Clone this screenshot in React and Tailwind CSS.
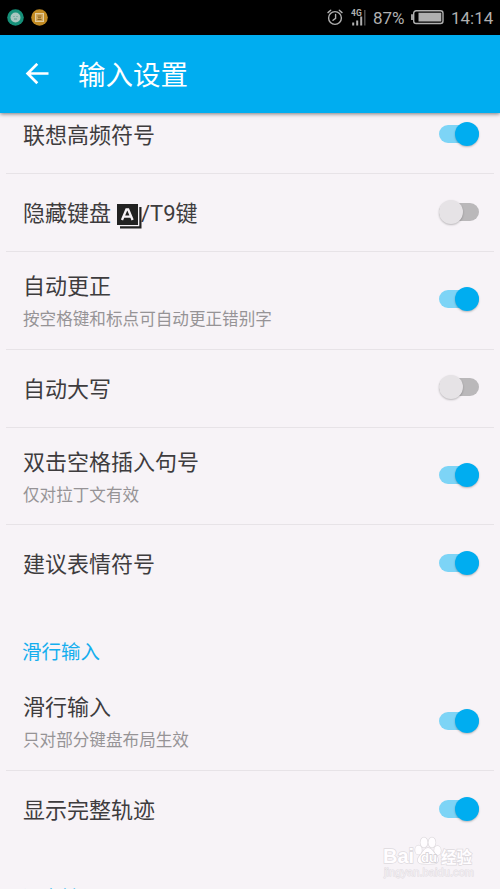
const rows = [
  { title: "联想高频符号", on: true },
  { title: "隐藏键盘", key: true, on: false },
  { title: "自动更正", hint: "按空格键和标点可自动更正错别字", on: true },
  { title: "自动大写", on: false },
  { title: "双击空格插入句号", hint: "仅对拉丁文有效", on: true },
  { title: "建议表情符号", on: true, last: true },
];

const slideRows = [
  { title: "滑行输入", hint: "只对部分键盘布局生效", on: true },
  { title: "显示完整轨迹", on: true, last: true },
];

function StatusBar() {
  return (
    <div className="h-[35px] shrink-0 bg-black flex items-center justify-between pl-[7px] pr-[7px] text-[#b0b0b0]">
      <div className="flex items-center gap-[7px]">
        <svg width="17" height="17" viewBox="0 0 17 17">
          <circle cx="8.5" cy="8.5" r="8.3" fill="#169079" />
          <circle cx="8.5" cy="8.5" r="5" fill="#a9c6c0" />
          <path d="M6.5 7.5h1M9.5 7.5h1M7 10h3" stroke="#5b9c90" strokeWidth="1" />
        </svg>
        <svg width="17" height="17" viewBox="0 0 17 17">
          <circle cx="8.5" cy="8.5" r="8.3" fill="#c18a22" />
          <rect x="4.5" y="4.5" width="8" height="8" fill="#d3a85b" stroke="#e2cda0" />
          <path d="M6.5 7h4M7 8.7h3M6.5 10.5h4" stroke="#8a6420" />
        </svg>
      </div>
      <div className="flex items-center">
        <svg width="16" height="17" viewBox="0 0 16 17" fill="none" stroke="currentColor" strokeWidth="1.4" strokeLinecap="round">
          <circle cx="8" cy="9" r="6.4" />
          <path d="M8.6 5.5V9.3L6 11.3M1 3.6L3.7 1.3M15 3.6L12.3 1.3" />
        </svg>
        <svg className="ml-[8px]" width="16" height="18" viewBox="0 0 16 18">
          <text x="0" y="7.2" fontSize="8.5" fontWeight="700" fontFamily="Roboto, sans-serif" fill="currentColor">4G</text>
          <path d="M2.2 13.5v3M6.2 11.5v5M10.2 7.5v9" stroke="currentColor" strokeWidth="2" />
          <path d="M13.8 1v15.5" stroke="#555" strokeWidth="1.4" />
        </svg>
        <span className="ml-[6px] pt-[2px] w-[33px] text-[17px] leading-none whitespace-nowrap">87%</span>
        <svg className="ml-[5px] -mt-[2px]" width="33" height="16" viewBox="0 0 33 16">
          <rect x="2.7" y="1.7" width="29.3" height="12.8" rx="2.5" fill="none" stroke="currentColor" strokeWidth="1.4" />
          <rect x="7.5" y="3.7" width="22.8" height="8.8" fill="currentColor" />
          <path d="M1 5.3v5.6" stroke="currentColor" strokeWidth="1.8" />
        </svg>
        <span className="ml-[7px] pt-[2px] w-[42px] text-[17px] leading-none whitespace-nowrap">14:14</span>
      </div>
    </div>
  );
}

function Header() {
  return (
    <div className="relative z-10 h-[78px] shrink-0 bg-[#00adf0] flex items-center pl-[25px] text-white shadow-[0_1px_4px_rgba(0,0,0,0.5)]">
      <svg width="24" height="22" viewBox="0 0 24 22" fill="none" stroke="currentColor" strokeWidth="2.7">
        <path d="M23.5 10.5H3M12.3 0.8L2.6 10.5L12.3 20.2" />
      </svg>
      <h1 className="ml-[29px] pt-[3px] text-[27.5px] leading-none">输入设置</h1>
    </div>
  );
}

function Switch({ on }) {
  return (
    <div className="relative mb-[2px] w-10 h-6 flex items-center">
      <div className={`w-10 h-[18px] rounded-full ${on ? "bg-[#7dd4f6]" : "bg-[#bab8ba]"}`}></div>
      <div className={`absolute top-0 size-6 rounded-full shadow-[0_1px_2px_rgba(0,0,0,0.25)] ${on ? "right-0 bg-[#00adf0]" : "left-0 bg-[#e6e3e6]"}`}></div>
    </div>
  );
}

// the "A" key with a second key behind it
function KeyIcon() {
  return (
    <svg className="ml-[6px] mt-[4px]" width="25" height="25" viewBox="0 0 25 25">
      <path d="M3 23.4H23.4V3" fill="none" stroke="#222" strokeWidth="2.2" />
      <rect width="21" height="21" fill="#222" />
      <path d="M5 16L9.4 5.5h1.8L15.6 16M7 12.6h6.8" fill="none" stroke="#f7f3f7" strokeWidth="2.3" />
    </svg>
  );
}

function Row({ title, hint, on, last, key9 }) {
  return (
    <div className={`mx-[6px] pl-[17px] pr-[15px] flex items-center justify-between border-b ${last ? "border-transparent" : "border-[#e7e3e7]"} ${hint ? "h-[97.7px]" : "h-[78px]"}`}>
      <div className="pt-[3px]">
        <div className="flex items-center text-[22px] leading-[30px] text-[#3e3c3e]">
          {title}
          {key9 && <KeyIcon />}
          {key9 && <span className="-ml-px">/T9键</span>}
        </div>
        {hint && <div className="mt-[6px] text-[16.6px] leading-6 text-[#969396]">{hint}</div>}
      </div>
      <Switch on={on} />
    </div>
  );
}

function SectionTitle({ children }) {
  return <h2 className="h-[70px] pl-[22px] pt-[35px] text-[19.5px] leading-[30px] text-[#14aeee]">{children}</h2>;
}

function Watermark() {
  return (
    <div className="absolute left-[382px] top-[834px] w-[94px]">
      <svg width="94" height="48" viewBox="0 0 94 48" fill="#fffdff" stroke="#dedade" strokeWidth="1.4" paintOrder="stroke" fontFamily="'Liberation Sans', 'Noto Sans CJK SC', sans-serif">
        <text x="1" y="29" fontSize="20" fontWeight="700" textLength="31" lengthAdjust="spacingAndGlyphs">Bai</text>
        <ellipse cx="36.5" cy="16" rx="3.3" ry="4.5" />
        <ellipse cx="42" cy="8.5" rx="3.5" ry="5" />
        <ellipse cx="50" cy="8.5" rx="3.5" ry="5" />
        <ellipse cx="55.5" cy="16.5" rx="3.3" ry="4.5" />
        <path d="M46 14c4 0 5 4 8 7s3 8-1 8.5c-5 .5-9 .5-14 0c-4-.5-4-5-1-8s4-7.5 8-7.5z" />
        <text x="39" y="28" fontSize="13" fontWeight="700" stroke="#d0ccd0">du</text>
        <text x="59" y="29" fontSize="15.5" fontWeight="700">经验</text>
        <text x="2" y="42" fontSize="11" strokeWidth="0.8" fill="#f3eff3" textLength="90">jingyan.baidu.com</text>
      </svg>
    </div>
  );
}

export default function App() {
  return (
    <div className="relative w-[500px] h-[889px] overflow-hidden bg-[#f7f3f7] flex flex-col font-[Roboto,'Noto_Sans_CJK_SC',sans-serif]">
      <StatusBar />
      <Header />
      <div className="-mt-[17px]">
        {rows.map((r) => <Row key={r.title} title={r.title} hint={r.hint} on={r.on} last={r.last} key9={r.key} />)}
        <SectionTitle>滑行输入</SectionTitle>
        {slideRows.map((r) => <Row key={r.title} title={r.title} hint={r.hint} on={r.on} last={r.last} />)}
        <SectionTitle>语音输入</SectionTitle>
      </div>
      <Watermark />
    </div>
  );
}
